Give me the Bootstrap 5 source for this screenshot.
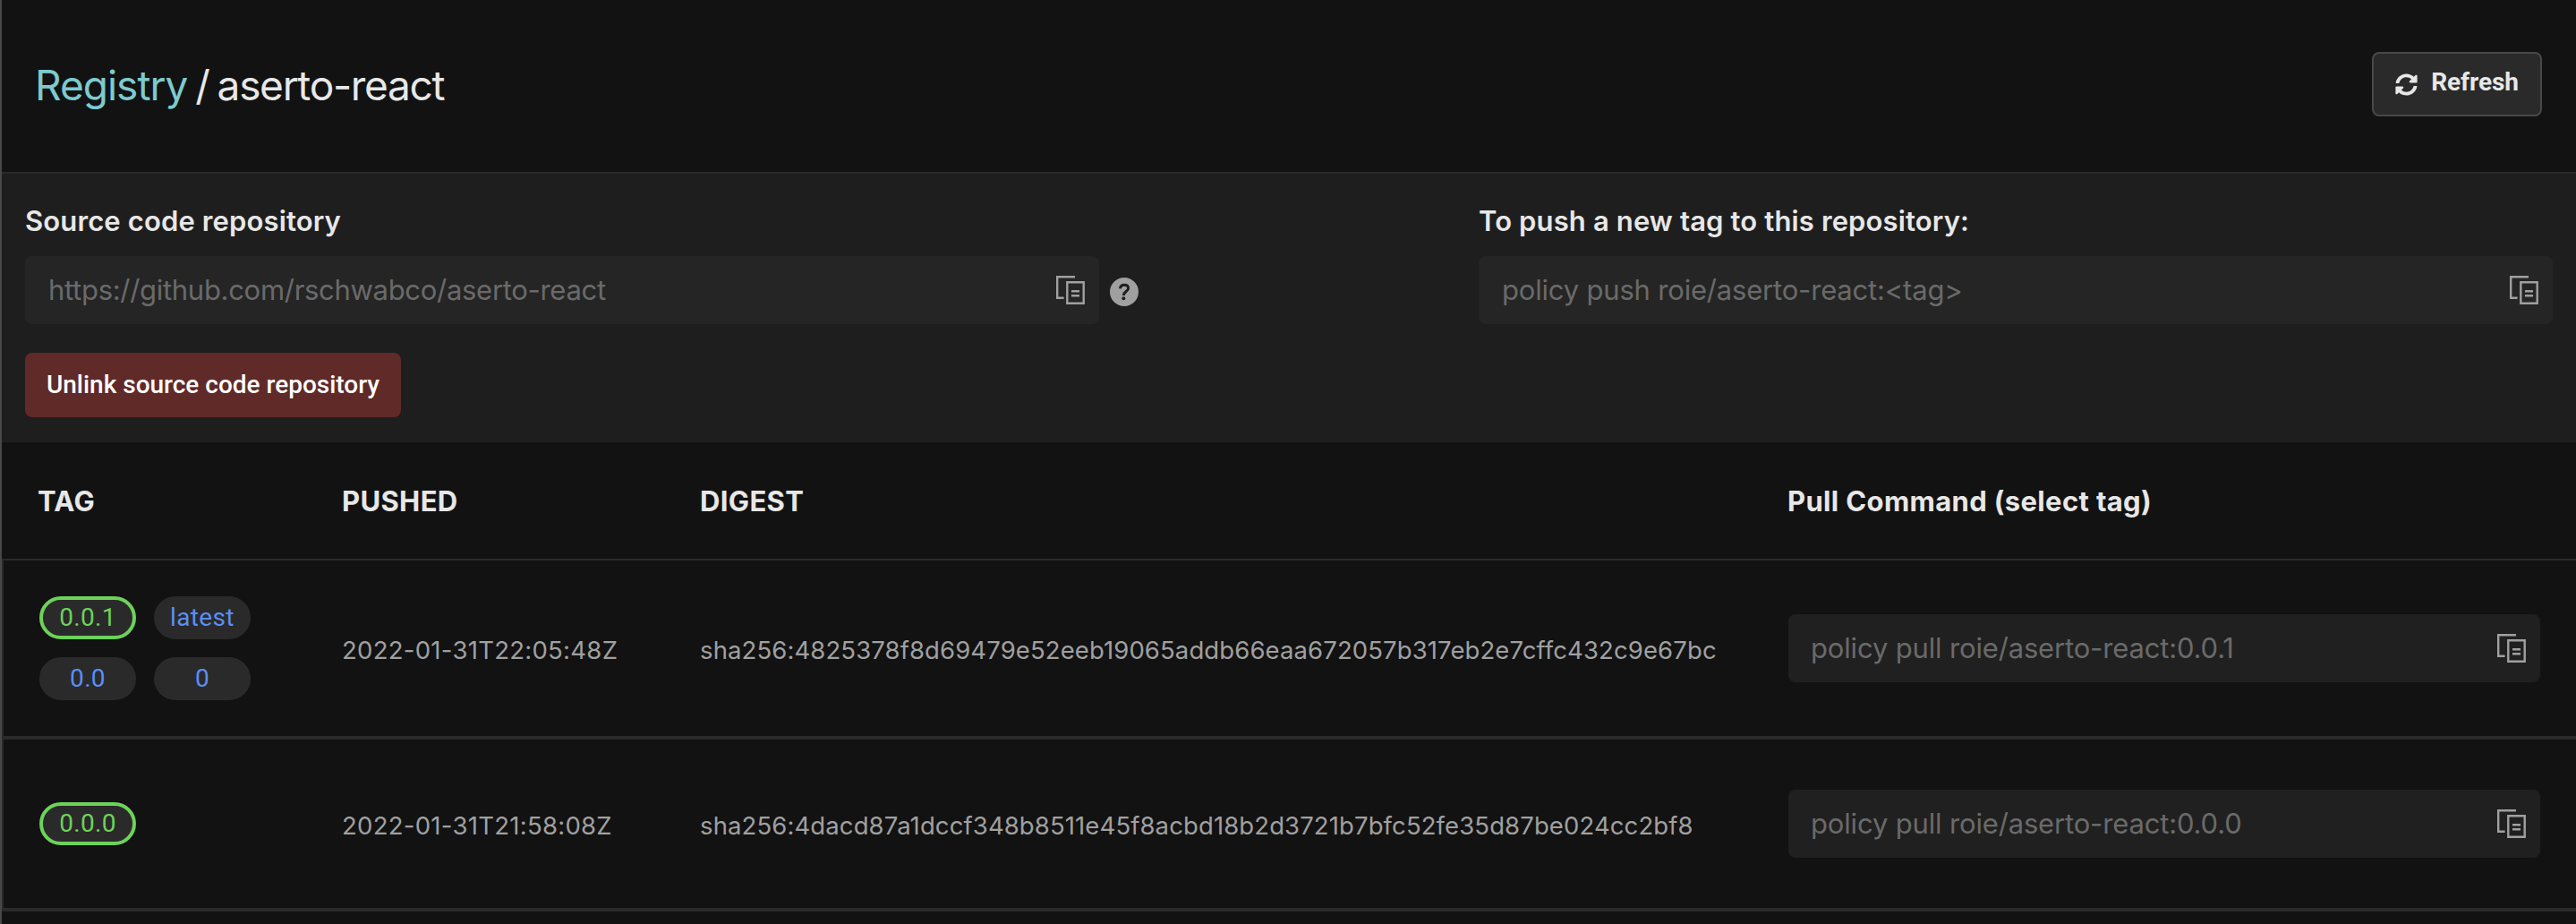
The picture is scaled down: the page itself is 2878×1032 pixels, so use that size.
<!DOCTYPE html>
<html lang="en" data-bs-theme="dark">
<head>
<meta charset="utf-8">
<meta name="viewport" content="width=device-width, initial-scale=1">
<title>Registry / aserto-react</title>
<link href="https://cdn.jsdelivr.net/npm/bootstrap@5.3.0/dist/css/bootstrap.min.css" rel="stylesheet">
<style>
  body { background: #121212; color: #e7e7e7; font-family: Inter, "Liberation Sans", sans-serif; font-size: 31px; min-height: 100vh; border-left: 2px solid #484848; overflow: hidden; }
  .page-head { height: 194px; padding: 0 38px 4px 37px; border-bottom: 2px solid #2a2a2a; }
  .page-title { color: #e7e7e7; font-size: 46px; line-height: 56px; letter-spacing: -1.3px; gap: 9px; padding-top: 2px; font-weight: 400; }
  .page-title a { color: #7dcace; letter-spacing: -1px; }
  .btn-ui { height: 72px; border-radius: 8px; font-family: Roboto, sans-serif; font-size: 28px; line-height: 40px; }
  .btn-refresh { width: 190px; background: #2a2a2a; border: 2px solid #484848; color: #e7e7e7; font-weight: 700; gap: 15px; letter-spacing: -.1px; }
  .btn-refresh span { padding-bottom: 4px; }
  .btn-unlink { width: 420px; margin-top: 32px; background: #602a29; border: 0; color: #fff; font-weight: 500; }
  .repo-panel { height: 300px; padding: 34px 26px 28px; background: #1e1e1e; }
  .field-label { color: #e7e7e7; font-weight: 600; line-height: 38px; margin-bottom: 20px; letter-spacing: .13px; }
  .copy-field { width: 1200px; height: 76px; padding: 0 16px 0 26px; background: #252525; color: #6a6a6a; border-radius: 8px; letter-spacing: -.19px; }
  .copy-field span { padding-top: 1px; }
  .copy-field.url span { letter-spacing: -.3px; }
  .tag-table .copy-field { width: 840px; background: #202020; padding-left: 25px; letter-spacing: -.16px; }
  .help { margin: 4px 0 0 12px; }
  .tag-table { table-layout: fixed; border-collapse: separate; border-spacing: 0; }
  .tag-table th { height: 132px; padding: 3px 0 0; color: #e7e7e7; font-weight: 700; border-bottom: 2px solid #2a2a2a; letter-spacing: .35px; }
  .tag-table td { height: 200px; padding: 0; border-bottom: 4px solid #2a2a2a; }
  .tag-table tr + tr td { height: 192px; }
  .tag-table th:first-child { padding-left: 40px; }
  .tag-table th:last-child { padding-left: 1px; }
  .tag-table td:first-child { padding-left: 40px; border-left: 2px solid #2a2a2a; }
  .tag-table td:last-child { padding-left: 2px; }
  .meta-text { padding-top: 4px; font-size: 27.5px; line-height: 40px; color: #a0a0a0; letter-spacing: .11px; }
  .meta-date { letter-spacing: .28px; }
  .tag-list { gap: 20px; width: 240px; }
  .tag-pill { width: 108px; height: 48px; border-radius: 24px; background: #2a2a2a; color: #5b8ef5; border: 4px solid #2a2a2a; font-family: Roboto, sans-serif; font-size: 28px; line-height: 40px; letter-spacing: .35px; }
  .tag-pill.active { border-color: #6dd25a; color: #6dd25a; }
</style>
<script src="https://cdn.jsdelivr.net/npm/bootstrap@5.3.0/dist/js/bootstrap.bundle.min.js"></script>
</head>
<body>
<svg class="d-none">
  <symbol id="copy" viewBox="0 0 32 32">
    <path d="M21 1.2H1.2v23.5H8.6M12.3 7.300h18.4v23.4H12.3zM17 17.3h9M17 22.3h9" fill="none" stroke="#a0a0a0" stroke-width="2.4"/>
  </symbol>
</svg>

<header class="page-head d-flex align-items-center justify-content-between">
  <h1 class="page-title d-flex m-0"><a href="#" class="text-decoration-none">Registry</a><span>/</span><span>aserto-react</span></h1>
  <button type="button" class="btn btn-ui btn-refresh d-flex align-items-center justify-content-center p-0">
    <svg width="25" height="25" viewBox="0 0 512 512" fill="currentColor"><path d="M370.72 133.28C339.458 104.008 298.888 87.962 255.848 88c-77.458.068-144.328 53.178-162.791 126.85-1.344 5.363-6.122 9.15-11.651 9.15H24.103c-7.498 0-13.194-6.807-11.807-14.176C33.933 94.924 134.813 8 256 8c66.448 0 126.791 26.136 171.315 68.685L463.03 40.97C478.149 25.851 504 36.559 504 57.941V192c0 13.255-10.745 24-24 24H345.941c-21.382 0-32.09-25.851-16.971-40.971l41.75-41.749zM32 296h134.059c21.382 0 32.09 25.851 16.971 40.971l-41.75 41.75c31.262 29.273 71.835 45.319 114.876 45.28 77.418-.07 144.315-53.144 162.787-126.849 1.344-5.363 6.122-9.15 11.651-9.15h57.304c7.498 0 13.194 6.807 11.807 14.176C478.067 417.076 377.187 504 256 504c-66.448 0-126.791-26.136-171.315-68.685L48.97 471.03C33.851 486.149 8 475.441 8 454.059V320c0-13.255 10.745-24 24-24z"/></svg>
    <span>Refresh</span>
  </button>
</header>

<section class="repo-panel d-flex justify-content-between align-items-start">
  <div>
    <div class="field-label">Source code repository</div>
    <div class="d-flex align-items-center">
      <div class="copy-field url d-flex align-items-center justify-content-between"><span>https://github.com/rschwabco/aserto-react</span><svg width="32" height="32"><use href="#copy"/></svg></div>
      <svg class="help" width="32" height="32" viewBox="0 0 32 32"><circle cx="16" cy="16" r="16" fill="#a0a0a0"/><path d="M11.5 12.4c.1-2.7 1.9-4.2 4.6-4.2 2.8 0 4.5 1.5 4.5 3.8 0 3.500-5.300 3.700-5.300 8" fill="none" stroke="#1e1e1e" stroke-width="3"/><circle cx="15.300" cy="23.300" r="2" fill="#1e1e1e"/></svg>
    </div>
    <button type="button" class="btn btn-ui btn-unlink p-0 d-block">Unlink source code repository</button>
  </div>
  <div>
    <div class="field-label">To push a new tag to this repository:</div>
    <div class="copy-field d-flex align-items-center justify-content-between"><span>policy push roie/aserto-react:&lt;tag&gt;</span><svg width="32" height="32"><use href="#copy"/></svg></div>
  </div>
</section>

<table class="tag-table w-100 align-middle">
  <colgroup><col width="380"><col width="400"><col width="1214"><col></colgroup>
  <thead>
    <tr><th>TAG</th><th>PUSHED</th><th>DIGEST</th><th>Pull Command (select tag)</th></tr>
  </thead>
  <tbody>
    <tr>
      <td><div class="tag-list d-flex flex-wrap"><span class="tag-pill active text-center">0.0.1</span><span class="tag-pill text-center">latest</span><span class="tag-pill text-center">0.0</span><span class="tag-pill text-center">0</span></div></td>
      <td><div class="meta-text meta-date">2022-01-31T22:05:48Z</div></td>
      <td><div class="meta-text">sha256:4825378f8d69479e52eeb19065addb66eaa672057b317eb2e7cffc432c9e67bc</div></td>
      <td><div class="copy-field d-flex align-items-center justify-content-between"><span>policy pull roie/aserto-react:0.0.1</span><svg width="32" height="32"><use href="#copy"/></svg></div></td>
    </tr>
    <tr>
      <td><div class="tag-list d-flex flex-wrap"><span class="tag-pill active text-center">0.0.0</span></div></td>
      <td><div class="meta-text meta-date">2022-01-31T21:58:08Z</div></td>
      <td><div class="meta-text">sha256:4dacd87a1dccf348b8511e45f8acbd18b2d3721b7bfc52fe35d87be024cc2bf8</div></td>
      <td><div class="copy-field d-flex align-items-center justify-content-between"><span>policy pull roie/aserto-react:0.0.0</span><svg width="32" height="32"><use href="#copy"/></svg></div></td>
    </tr>
  </tbody>
</table>
</body>
</html>
